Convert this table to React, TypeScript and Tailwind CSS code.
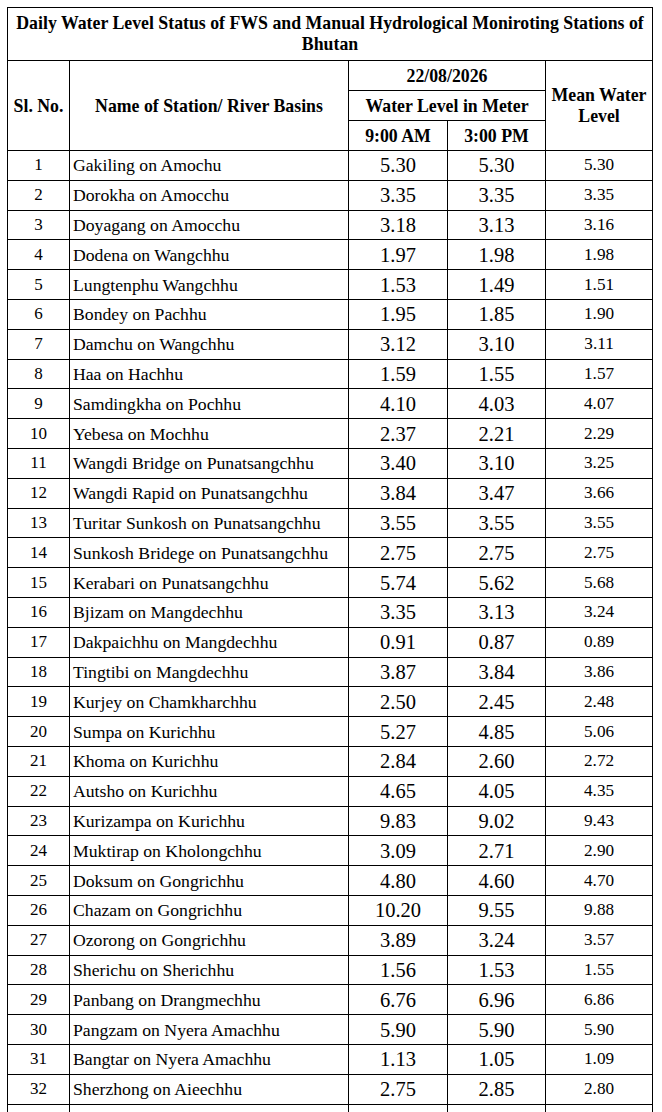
import React from "react";

type Row = [string, string, string, string];

const rows: Row[] = [
  ["Gakiling on Amochu", "5.30", "5.30", "5.30"],
  ["Dorokha on Amocchu", "3.35", "3.35", "3.35"],
  ["Doyagang on Amocchu", "3.18", "3.13", "3.16"],
  ["Dodena on Wangchhu", "1.97", "1.98", "1.98"],
  ["Lungtenphu Wangchhu", "1.53", "1.49", "1.51"],
  ["Bondey on Pachhu", "1.95", "1.85", "1.90"],
  ["Damchu on Wangchhu", "3.12", "3.10", "3.11"],
  ["Haa on Hachhu", "1.59", "1.55", "1.57"],
  ["Samdingkha on Pochhu", "4.10", "4.03", "4.07"],
  ["Yebesa on Mochhu", "2.37", "2.21", "2.29"],
  ["Wangdi Bridge on Punatsangchhu", "3.40", "3.10", "3.25"],
  ["Wangdi Rapid on Punatsangchhu", "3.84", "3.47", "3.66"],
  ["Turitar Sunkosh on Punatsangchhu", "3.55", "3.55", "3.55"],
  ["Sunkosh Bridege on Punatsangchhu", "2.75", "2.75", "2.75"],
  ["Kerabari on Punatsangchhu", "5.74", "5.62", "5.68"],
  ["Bjizam on Mangdechhu", "3.35", "3.13", "3.24"],
  ["Dakpaichhu on Mangdechhu", "0.91", "0.87", "0.89"],
  ["Tingtibi on Mangdechhu", "3.87", "3.84", "3.86"],
  ["Kurjey on Chamkharchhu", "2.50", "2.45", "2.48"],
  ["Sumpa on Kurichhu", "5.27", "4.85", "5.06"],
  ["Khoma on Kurichhu", "2.84", "2.60", "2.72"],
  ["Autsho on Kurichhu", "4.65", "4.05", "4.35"],
  ["Kurizampa on Kurichhu", "9.83", "9.02", "9.43"],
  ["Muktirap on Kholongchhu", "3.09", "2.71", "2.90"],
  ["Doksum on Gongrichhu", "4.80", "4.60", "4.70"],
  ["Chazam on Gongrichhu", "10.20", "9.55", "9.88"],
  ["Ozorong on Gongrichhu", "3.89", "3.24", "3.57"],
  ["Sherichu on Sherichhu", "1.56", "1.53", "1.55"],
  ["Panbang on Drangmechhu", "6.76", "6.96", "6.86"],
  ["Pangzam on Nyera Amachhu", "5.90", "5.90", "5.90"],
  ["Bangtar on Nyera Amachhu", "1.13", "1.05", "1.09"],
  ["Sherzhong on Aieechhu", "2.75", "2.85", "2.80"],
];

const cell = "border border-black p-0 align-middle";
const serif = "font-['Liberation_Serif']";

function Txt({ className, children }: { className: string; children: React.ReactNode }) {
  return <div className={`${serif} ${className}`}>{children}</div>;
}

export default function App() {
  return (
    <div className="min-h-screen bg-white pl-[7px] pt-[7px] text-black">
      <table className="border-collapse table-fixed w-[645px]">
        <colgroup>
          <col className="w-[62px]" />
          <col className="w-[279px]" />
          <col className="w-[99px]" />
          <col className="w-[98px]" />
          <col className="w-[107px]" />
        </colgroup>
        <thead>
          <tr className="h-[53px]">
            <th colSpan={5} className={cell}>
              <Txt className="text-[17.8px] font-bold leading-[21px] text-center whitespace-nowrap">
                Daily Water Level Status of FWS and Manual Hydrological Moniroting Stations of
                <br />
                Bhutan
              </Txt>
            </th>
          </tr>
          <tr className="h-[30px]">
            <th rowSpan={3} className={cell}>
              <Txt className="text-[17.8px] font-bold leading-[20px] text-center">Sl. No.</Txt>
            </th>
            <th rowSpan={3} className={cell}>
              <Txt className="text-[17.8px] font-bold leading-[20px] text-center">Name of Station/ River Basins</Txt>
            </th>
            <th colSpan={2} className={cell}>
              <Txt className="text-[17.8px] font-bold leading-[20px] text-center">22/08/2026</Txt>
            </th>
            <th rowSpan={3} className={cell}>
              <Txt className="text-[17.8px] font-bold leading-[21px] text-center">
                Mean Water
                <br />
                Level
              </Txt>
            </th>
          </tr>
          <tr className="h-[30px]">
            <th colSpan={2} className={cell}>
              <Txt className="text-[17.8px] font-bold leading-[20px] text-center">Water Level in Meter</Txt>
            </th>
          </tr>
          <tr className="h-[30px]">
            <th className={cell}>
              <Txt className="text-[17.8px] font-bold leading-[20px] text-center">9:00 AM</Txt>
            </th>
            <th className={cell}>
              <Txt className="text-[17.8px] font-bold leading-[20px] text-center">3:00 PM</Txt>
            </th>
          </tr>
        </thead>
        <tbody>
          {rows.map((r, i) => (
            <tr key={i} className="h-[29.8px]">
              <td className={cell}>
                <Txt className="text-[17px] leading-[20px] text-center">{i + 1}</Txt>
              </td>
              <td className={cell}>
                <Txt className="pl-[3px] text-[17.7px] leading-[20px] whitespace-nowrap">{r[0]}</Txt>
              </td>
              <td className={cell}>
                <Txt className="text-[20.5px] leading-[20px] text-center">{r[1]}</Txt>
              </td>
              <td className={cell}>
                <Txt className="text-[20.5px] leading-[20px] text-center">{r[2]}</Txt>
              </td>
              <td className={cell}>
                <Txt className="text-[17.2px] leading-[20px] text-center">{r[3]}</Txt>
              </td>
            </tr>
          ))}
          <tr className="h-[29.8px]">
            <td className={cell} />
            <td className={cell} />
            <td className={cell} />
            <td className={cell} />
            <td className={cell} />
          </tr>
        </tbody>
      </table>
    </div>
  );
}
